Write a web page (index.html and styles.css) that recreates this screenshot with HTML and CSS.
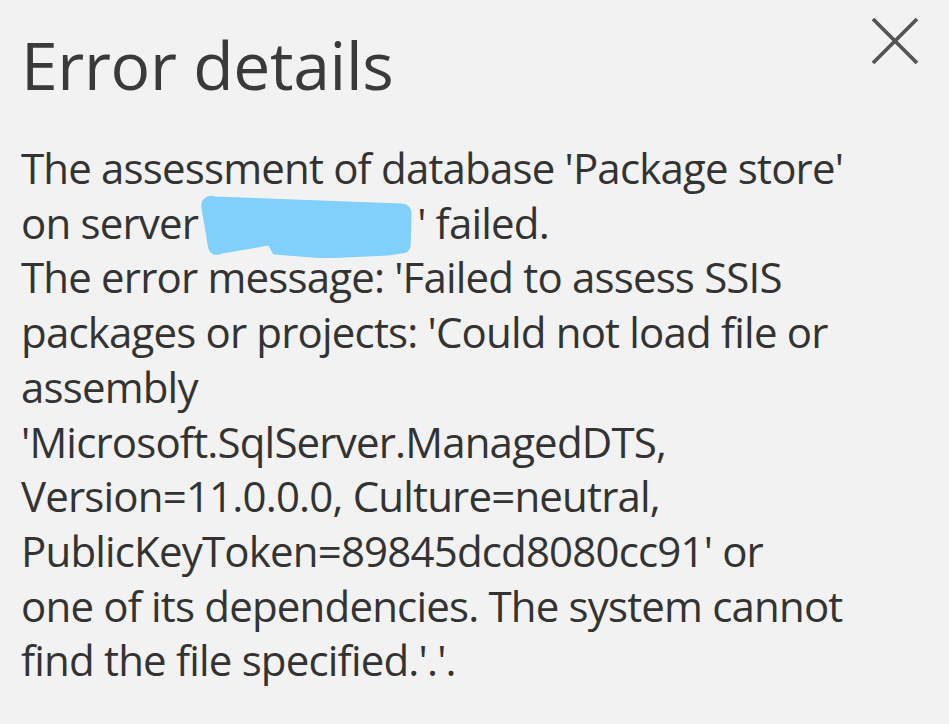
FILE: index.html
```html
<!DOCTYPE html>
<html lang="en">
<head>
<meta charset="utf-8">
<title>Error details</title>
<link rel="stylesheet" href="styles.css">
</head>
<body>
<div class="dialog">
  <div class="header">
    <h1 class="title">Error details</h1>
    <button class="close" aria-label="Close">
      <svg viewBox="0 0 48 48" width="48" height="48"><path d="M2 2 L46 46 M46 2 L2 46" stroke="#555555" stroke-width="3.8" fill="none"/></svg>
    </button>
  </div>
  <p class="message">The assessment of database 'Package store'<br>on server <span class="redact"><svg viewBox="0 0 220 62" width="212" height="62" preserveAspectRatio="none"><path d="M4 4 Q8 0 14 2 L208 9 Q217 10 217 18 L216 50 Q215 56 208 56 L194 58 L128 61 L76 57 L72 50 L70 48 L22 56 Q12 60 9 52 L2 12 Q1 6 4 4 Z" fill="#80d0fb" stroke="#80d0fb" stroke-width="3" stroke-linejoin="round"/></svg></span>' failed.<br>The error message: 'Failed to assess SSIS<br>packages or projects: 'Could not load file or<br>assembly<br>'Microsoft.SqlServer.ManagedDTS,<br>Version=11.0.0.0, Culture=neutral,<br>PublicKeyToken=89845dcd8080cc91' or<br>one of its dependencies. The system cannot<br>find the file specified.'.'.</p>
</div>
</body>
</html>
```
FILE: styles.css
```css
html, body {
  margin: 0;
  padding: 0;
  background: #f2f2f2;
}
.dialog {
  width: 949px;
  height: 724px;
  box-sizing: border-box;
  padding: 17px 30px 0 21px;
  font-family: "Open Sans", "Noto Sans", sans-serif;
  color: #333333;
}
.header {
  display: flex;
  justify-content: space-between;
  align-items: flex-start;
}
.title {
  margin: 3px 0 0 0;
  font-size: 66px;
  font-weight: 400;
  line-height: 88px;
  letter-spacing: -0.35px;
  color: #3a3a3a;
}
.close {
  border: 0;
  background: none;
  padding: 0;
  margin: 0;
  width: 48px;
  height: 48px;
}
.close svg { display: block; }
.message {
  margin: 33px 0 0 0;
  font-size: 42px;
  line-height: 54.7px;
  letter-spacing: -0.82px;
  white-space: nowrap;
}
.redact {
  display: inline-block;
  position: relative;
  width: 209px;
  height: 1px;
}
.redact svg {
  position: absolute;
  left: -7px;
  top: -42px;
  display: block;
}
```
